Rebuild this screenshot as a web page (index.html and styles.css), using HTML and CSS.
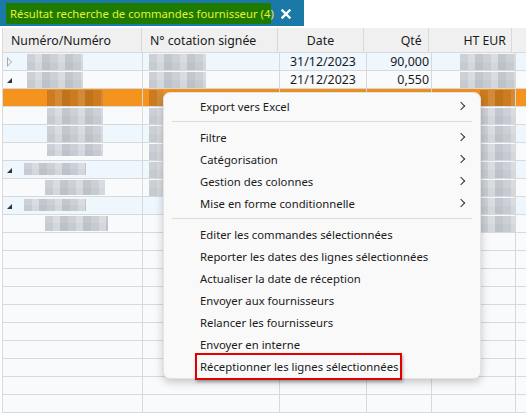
FILE: index.html
```html
<!DOCTYPE html>
<html lang="fr">
<head>
<meta charset="utf-8">
<link rel="stylesheet" href="styles.css">
</head>
<body>
<div class="page">
  <div class="tabbar">
    <div class="tab">Résultat recherche de commandes fournisseur (4)</div>
    <svg class="close" width="10" height="10" viewBox="0 0 10 10"><path d="M1.5 1.5 L8.5 8.5 M8.5 1.5 L1.5 8.5" stroke="#fff" stroke-width="2.4" stroke-linecap="square"/></svg>
  </div>
  <div class="grid">
    <div class="row head">
      <div class="c c1">Numéro/Numéro</div>
      <div class="c c2">N° cotation signée</div>
      <div class="c c3 center">Date</div>
      <div class="c c4 right">Qté</div>
      <div class="c c5 right">HT EUR</div>
      <div class="c c6"></div>
    </div>
    <div class="row alt">
      <div class="c c1"><span class="tri-open"></span><span class="blur b27"></span></div>
      <div class="c c2"><span class="blur b150"></span></div>
      <div class="c c3 center">31/12/2023</div>
      <div class="c c4 right">90,000</div>
      <div class="c c5"><span class="blur b461"></span></div>
      <div class="c c6"></div>
    </div>
    <div class="row">
      <div class="c c1"><span class="tri"></span><span class="blur b27"></span></div>
      <div class="c c2"><span class="blur b150"></span></div>
      <div class="c c3 center">21/12/2023</div>
      <div class="c c4 right">0,550</div>
      <div class="c c5"><span class="blur b461"></span></div>
      <div class="c c6"></div>
    </div>
    <div class="row sel">
      <div class="c c1"><span class="blur dark b47"></span></div>
      <div class="c c2"><span class="blur dark b150s"></span></div>
      <div class="c c3"></div><div class="c c4"></div>
      <div class="c c5"><span class="blur dark b481"></span></div>
      <div class="c c6"></div>
    </div>
    <div class="row">
      <div class="c c1"><span class="blur b47"></span></div>
      <div class="c c2"><span class="blur b150s"></span></div>
      <div class="c c3"></div><div class="c c4"></div>
      <div class="c c5"><span class="blur b481"></span></div>
      <div class="c c6"></div>
    </div>
    <div class="row alt">
      <div class="c c1"><span class="blur b47"></span></div>
      <div class="c c2"><span class="blur b150s"></span></div>
      <div class="c c3"></div><div class="c c4"></div>
      <div class="c c5"><span class="blur b481"></span></div>
      <div class="c c6"></div>
    </div>
    <div class="row">
      <div class="c c1"><span class="blur b47 short"></span></div>
      <div class="c c2"><span class="blur b150s"></span></div>
      <div class="c c3"></div><div class="c c4"></div>
      <div class="c c5"><span class="blur b481"></span></div>
      <div class="c c6"></div>
    </div>
    <div class="row alt">
      <div class="c c1"><span class="tri"></span><span class="blur b24"></span></div>
      <div class="c c2"><span class="blur b150s"></span></div>
      <div class="c c3"></div><div class="c c4"></div>
      <div class="c c5"><span class="blur b481"></span></div>
      <div class="c c6"></div>
    </div>
    <div class="row">
      <div class="c c1"><span class="blur b45"></span></div>
      <div class="c c2"><span class="blur b150s"></span></div>
      <div class="c c3"></div><div class="c c4"></div>
      <div class="c c5"><span class="blur b481"></span></div>
      <div class="c c6"></div>
    </div>
    <div class="row alt">
      <div class="c c1"><span class="tri"></span><span class="blur b24"></span></div>
      <div class="c c2"></div>
      <div class="c c3"></div><div class="c c4"></div>
      <div class="c c5"><span class="blur b481"></span></div>
      <div class="c c6"></div>
    </div>
    <div class="row">
      <div class="c c1"><span class="blur b45 wide"></span></div>
      <div class="c c2"></div>
      <div class="c c3"></div><div class="c c4"></div>
      <div class="c c5"><span class="blur b481"></span></div>
      <div class="c c6"></div>
    </div>
    <div class="row empty"><div class="c c1"></div><div class="c c2"></div><div class="c c3"></div><div class="c c4"></div><div class="c c5"></div><div class="c c6"></div></div>
    <div class="row empty"><div class="c c1"></div><div class="c c2"></div><div class="c c3"></div><div class="c c4"></div><div class="c c5"></div><div class="c c6"></div></div>
    <div class="row empty"><div class="c c1"></div><div class="c c2"></div><div class="c c3"></div><div class="c c4"></div><div class="c c5"></div><div class="c c6"></div></div>
    <div class="row empty"><div class="c c1"></div><div class="c c2"></div><div class="c c3"></div><div class="c c4"></div><div class="c c5"></div><div class="c c6"></div></div>
    <div class="row empty"><div class="c c1"></div><div class="c c2"></div><div class="c c3"></div><div class="c c4"></div><div class="c c5"></div><div class="c c6"></div></div>
    <div class="row empty"><div class="c c1"></div><div class="c c2"></div><div class="c c3"></div><div class="c c4"></div><div class="c c5"></div><div class="c c6"></div></div>
    <div class="row empty"><div class="c c1"></div><div class="c c2"></div><div class="c c3"></div><div class="c c4"></div><div class="c c5"></div><div class="c c6"></div></div>
    <div class="row empty"><div class="c c1"></div><div class="c c2"></div><div class="c c3"></div><div class="c c4"></div><div class="c c5"></div><div class="c c6"></div></div>
    <div class="row empty"><div class="c c1"></div><div class="c c2"></div><div class="c c3"></div><div class="c c4"></div><div class="c c5"></div><div class="c c6"></div></div>
    <div class="row empty"><div class="c c1"></div><div class="c c2"></div><div class="c c3"></div><div class="c c4"></div><div class="c c5"></div><div class="c c6"></div></div>
  </div>

  <div class="menu">
    <div class="item"><span>Export vers Excel</span><span class="chev"></span></div>
    <div class="sep"></div>
    <div class="item"><span>Filtre</span><span class="chev"></span></div>
    <div class="item"><span>Catégorisation</span><span class="chev"></span></div>
    <div class="item"><span>Gestion des colonnes</span><span class="chev"></span></div>
    <div class="item"><span>Mise en forme conditionnelle</span><span class="chev"></span></div>
    <div class="sep"></div>
    <div class="item"><span>Editer les commandes sélectionnées</span></div>
    <div class="item"><span>Reporter les dates des lignes sélectionnées</span></div>
    <div class="item"><span>Actualiser la date de réception</span></div>
    <div class="item"><span>Envoyer aux fournisseurs</span></div>
    <div class="item"><span>Relancer les fournisseurs</span></div>
    <div class="item"><span>Envoyer en interne</span></div>
    <div class="item hl"><span class="box">Réceptionner les lignes sélectionnées</span></div>
  </div>
</div>
</body>
</html>
```
FILE: styles.css
```css
* { box-sizing: border-box; }
html, body { margin: 0; padding: 0; background: #ffffff; }
body {
  font-family: "Noto Sans", "Open Sans", sans-serif;
  color: #1a1a1a;
  width: 526px;
  height: 417px;
  overflow: hidden;
}
.page { position: relative; width: 526px; height: 417px; overflow: hidden; }

.tabbar {
  width: 304px;
  height: 26px;
  background: #1b79a8;
  display: flex;
  align-items: center;
  padding: 0 0 0 6px;
}
.tab {
  height: 21px;
  width: 265px;
  margin-top: 1px;
  background: #1e7b00;
  color: #e4f23a;
  font-size: 11.3px;
  line-height: 21px;
  padding-left: 4px;
  white-space: nowrap;
}
.close { margin-left: 10px; margin-top: 2px; }

.grid {
  margin-top: 2px;
  margin-left: 2px;
  border-left: 1px solid #dadada;
}
.row {
  display: flex;
  height: 18px;
  border-bottom: 1px solid #d9d9d9;
  background: #f9fafc;
  font-size: 12.4px;
}
.row.alt { background: #eef6fe; }
.row.sel { background: #f4931d; }
.row.head {
  height: 25px;
  background: #f0f0f0;
  font-size: 12.3px;
  border-bottom: 1px solid #d9d9d9;
}
.c {
  position: relative;
  height: 100%;
  border-right: 1px solid #d9d9d9;
  display: flex;
  align-items: center;
  white-space: nowrap;
  padding: 0 2px;
}
.head .c { padding: 0 7px; }
.c1 { width: 140px; }
.c2 { width: 137px; }
.c3 { width: 87px; }
.c4 { width: 65px; }
.c5 { width: 84px; }
.c6 { flex: 1; border-right: none; }
.center { justify-content: center; }
.right { justify-content: flex-end; }
.head .c1 { padding-left: 8px; }
.head .c2 { padding-left: 8px; }
.head .c4 { padding-right: 6px; }
.head .c5 { padding-right: 5px; }

.tri-open {
  position: absolute;
  left: 4px; top: 4px;
  width: 0; height: 0;
  border-top: 5px solid transparent;
  border-bottom: 5px solid transparent;
  border-left: 5px solid #a8a8a8;
}
.tri-open::after {
  content: "";
  position: absolute;
  left: -4px; top: -3px;
  border-top: 3px solid transparent;
  border-bottom: 3px solid transparent;
  border-left: 3px solid #eef6fe;
}
.tri {
  position: absolute;
  left: 4px; top: 7px;
  width: 0; height: 0;
  border-left: 5px solid transparent;
  border-bottom: 5px solid #333;
}

.blur {
  position: absolute;
  top: 1px;
  height: 16px;
  background:
    repeating-linear-gradient(90deg, rgba(255,255,255,0) 0 8px, rgba(255,255,255,0.25) 8px 15px, rgba(120,130,145,0.12) 15px 23px),
    linear-gradient(180deg, #cdd0d6 0 50%, #c6cbd2 50% 100%);
}
.blur.dark {
  background:
    repeating-linear-gradient(90deg, rgba(255,255,255,0) 0 8px, rgba(255,255,255,0.12) 8px 15px, rgba(80,40,0,0.1) 15px 23px),
    #cc7c1e;
}
.b27 { left: 24px; width: 56px; }
.b24 { left: 21px; width: 62px; height: 12px; top: 2px; }
.b47 { left: 44px; width: 56px; }
.b47.short { height: 12px; }
.b45 { left: 42px; width: 60px; height: 15px; }
.b45.wide { width: 63px; }
.b150 { left: 6px; width: 57px; }
.b150s { left: 6px; width: 14px; }
.b461 { left: 28px; width: 55px; }
.b481 { left: 48px; width: 35px; }

.menu {
  position: absolute;
  left: 163px;
  top: 92px;
  width: 318px;
  height: 287px;
  background: #f9f9f9;
  border: 1px solid #e3e3e3;
  border-radius: 7px;
  box-shadow: 0 3px 8px rgba(0,0,0,0.22);
  padding: 2px 0 0 0;
  font-size: 11.3px;
  color: #1a1a1a;
}
.item {
  height: 22px;
  display: flex;
  align-items: center;
  justify-content: space-between;
  padding: 0 14px 0 36px;
  white-space: nowrap;
}
.sep {
  height: 1px;
  background: #dcdcdc;
  margin: 4px 8px 4px 8px;
}
.chev {
  width: 6px; height: 6px;
  border-right: 1.5px solid #333;
  border-top: 1.5px solid #333;
  transform: rotate(45deg);
  margin-right: 2px;
}
.item.hl { position: relative; }
.box {
  position: relative;
}
.box::before {
  content: "";
  position: absolute;
  left: -5px; right: -4px;
  top: -6px; bottom: -6px;
  border: 2px solid #e00000;
  box-shadow: 1px 2px 3px rgba(0,0,0,0.3);
}
```
